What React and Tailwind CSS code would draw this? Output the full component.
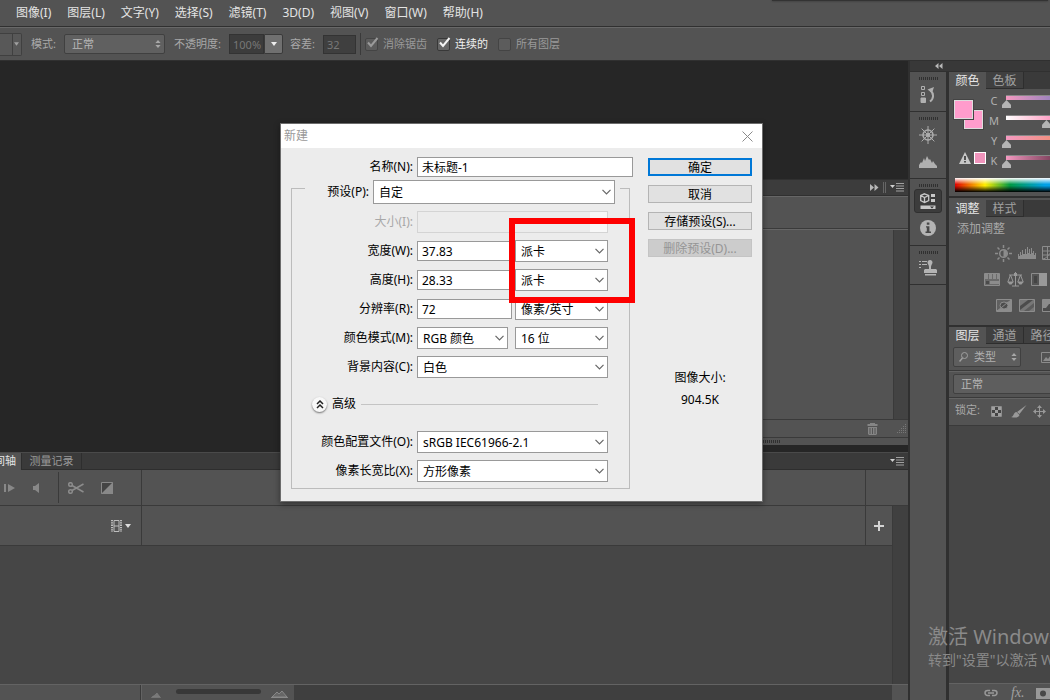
import { useState } from "react";

const MENUS = ["图像(I)", "图层(L)", "文字(Y)", "选择(S)", "滤镜(T)", "3D(D)", "视图(V)", "窗口(W)", "帮助(H)"];

/* ---------- small shared pieces ---------- */

const UpDown = ({ className }) => (
  <svg className={className} width="6" height="8" viewBox="0 0 6 8" fill="#a8a8a8">
    <path d="M3 0L5.6 3H.4zM3 8L.4 5h5.2z" />
  </svg>
);

const Caret = ({ fill = "#d0d0d0" }) => (
  <svg width="6" height="4" viewBox="0 0 6 4" fill={fill}>
    <path d="M0 0h6L3 4z" />
  </svg>
);

const PanelMenuIcon = () => (
  <svg width="14" height="9" viewBox="0 0 14 9" fill="#a0a0a0">
    <path d="M0 2h5L2.500 5z" fill="#d0d0d0" />
    <path d="M6 0h8v1H6zM6 2.500h8v1H6zM6 5h8v1H6zM6 7.500h8v1H6z" />
  </svg>
);

const Grip = () => (
  <svg width="19" height="3" viewBox="0 0 19 3" className="mx-auto">
    <path d="M.5 0v3M2.500 0v3M4.500 0v3M6.500 0v3M8.500 0v3M10.500 0v3M12.500 0v3M14.500 0v3M16.500 0v3M18.500 0v3" stroke="#303030" />
  </svg>
);

const CheckItem = ({ id, label, checked, disabled }) => {
  const [on, setOn] = useState(checked);
  return (
    <div className="flex items-center gap-[5px]">
      <div className="relative w-[13px] h-[13px]">
        <input
          id={id}
          type="checkbox"
          checked={on}
          disabled={disabled}
          onChange={(e) => setOn(e.target.checked)}
          className="peer block appearance-none w-[13px] h-[13px] rounded-[2px] border border-[#383838] bg-[#666] disabled:border-[#444] disabled:bg-[#5c5c5c]"
        />
        <svg
          className="absolute -top-px left-px hidden peer-checked:block pointer-events-none"
          width="13" height="12" viewBox="0 0 13 12" fill="none"
          stroke={disabled ? "#9a9a9a" : "#f4f4f4"} strokeWidth="2"
        >
          <path d="M2 5.500L5 9L11.500 1" />
        </svg>
      </div>
      <label htmlFor={id} className={disabled ? "text-[#999]" : "text-[#f0f0f0]"}>{label}</label>
    </div>
  );
};

/* ---------- top bars ---------- */

const OptionsBar = () => (
  <div className="flex items-center h-[33px] shrink-0 border-t border-[#686868] text-[11px] text-[#a8a8a8] whitespace-nowrap">
    <button aria-label="工具预设" className="flex items-center justify-end w-[22px] h-[23px] pr-[2px] rounded-r-[2px] border border-l-0 border-[#404040] bg-[#585858]">
      <span className="flex items-center justify-center h-full w-[7px] pl-px border-l border-[#404040]"><Caret fill="#a0a0a0" /></span>
    </button>
    <label htmlFor="mode" className="ml-[9px] w-[33px]">模式:</label>
    <div className="relative">
      <select id="mode" className="block appearance-none w-[101px] h-[20px] pl-[7px] rounded-[2px] border border-[#404040] bg-[#606060] text-[#b8b8b8]">
        <option>正常</option>
      </select>
      <UpDown className="absolute right-[4px] top-[6px] pointer-events-none" />
    </div>
    <label htmlFor="opacity" className="ml-[9px] w-[55px]">不透明度:</label>
    <input id="opacity" defaultValue="100%" className="w-[35px] h-[20px] pl-[3px] border border-[#333] bg-[#3c3c3c] text-[#777]" />
    <button aria-label="不透明度滑块" className="flex items-center justify-center w-[19px] h-[20px] rounded-r-[2px] border border-[#3a3a3a] bg-[#707070]"><Caret fill="#eee" /></button>
    <label htmlFor="tolerance" className="ml-[7px] w-[33px]">容差:</label>
    <input id="tolerance" defaultValue="32" className="w-[33px] h-[19px] pl-[3px] border border-[#333] bg-[#3f3f3f] text-[#777]" />
    <div className="w-px h-[22px] ml-[4px] mr-[4px] bg-[#3a3a3a]" />
    <div className="flex gap-[10px]">
      <CheckItem id="antialias" label="消除锯齿" checked disabled />
      <CheckItem id="contiguous" label="连续的" checked />
      <CheckItem id="allLayers" label="所有图层" checked={false} disabled />
    </div>
  </div>
);

/* ---------- document area ---------- */

const FloatingPanel = () => (
  <div className="flex flex-col w-[420px] h-[266px] mb-[7px] border-t border-[#303030] bg-[#535353]">
    <div className="flex items-center justify-end gap-[4px] h-[16px] pr-[4px] bg-[#3c3c3c] border-b border-[#303030]">
      <svg width="9" height="7" viewBox="0 0 9 7" fill="#b8b8b8"><path d="M0 0l4 3.500L0 7zM4.500 0l4 3.500-4 3.500z" /></svg>
      <div className="w-[3px] h-[11px] border-x border-[#666]" />
      <PanelMenuIcon />
    </div>
    <div className="h-[33px] border-t border-[#666] border-b border-b-[#3a3a3a]" />
    <div className="flex justify-end flex-1 border-t border-[#666]">
      <div className="w-[15px] border-l border-[#3a3a3a] bg-[#434343]" />
    </div>
    <div className="flex items-center justify-end gap-[18px] h-[18px] pr-[2px] border-t border-[#3a3a3a]">
      <svg width="11" height="12" viewBox="0 0 11 12" fill="#858585">
        <path d="M3 0h5v1h2.500v2H.5V1H3zM1 4h9v7l-1 1H2l-1-1z" />
        <path d="M3 5v6M5.500 5v6M8 5v6" stroke="#555" />
      </svg>
      <svg width="10" height="10" viewBox="0 0 10 10" stroke="#777" strokeDasharray="1 1">
        <path d="M9.500 0v10M7.500 2v8M5.500 4v6M3.500 6v4M1.500 8v2" />
      </svg>
    </div>
    <div className="flex items-center h-[8px] border-t border-[#3a3a3a]">
      <svg width="292" height="3"><path d="M257 1.500h35" stroke="#303030" strokeWidth="3" strokeDasharray="1 1" /></svg>
    </div>
  </div>
);

const Timeline = () => (
  <section className="flex flex-col flex-1 min-h-0 bg-[#464646]">
    <div className="flex h-[18px] shrink-0 border-t border-b border-t-[#4a4a4a] border-b-[#2e2e2e] bg-[#3a3a3a] text-[11px] leading-[16px] whitespace-nowrap">
      <button className="flex justify-end w-[21px] h-[17px] pr-[5px] overflow-hidden bg-[#535353] text-[#e4e4e4]">时间轴</button>
      <button className="w-[61px] border-x border-[#2e2e2e] text-[#999]">测量记录</button>
      <div className="flex items-center justify-end flex-1 pr-[4px]"><PanelMenuIcon /></div>
    </div>
    <div className="flex h-[36px] shrink-0 bg-[#535353] border-b border-[#3a3a3a]">
      <div className="flex items-center w-[142px] border-r border-[#3a3a3a]">
        <button aria-label="下一帧" className="ml-[4px]">
          <svg width="11" height="8" viewBox="0 0 11 8" fill="#888"><path d="M0 0h2v8H0zM4 0l7 4-7 4z" /></svg>
        </button>
        <button aria-label="音频" className="ml-[18px]">
          <svg width="8" height="10" viewBox="0 0 8 10" fill="#888"><path d="M0 3h2l4-3v10L2 7H0z" /></svg>
        </button>
        <div className="w-px h-[31px] ml-[17px] bg-[#3a3a3a]" />
        <button aria-label="拆分" className="ml-[9px]">
          <svg width="16" height="12" viewBox="0 0 16 12" fill="none" stroke="#8c8c8c" strokeWidth="1.500">
            <circle cx="2.500" cy="2.500" r="1.800" /><circle cx="2.500" cy="9.500" r="1.800" />
            <path d="M4 3.500L15.500 10M4 8.500L15.500 2" />
          </svg>
        </button>
        <button aria-label="过渡" className="ml-[17px]">
          <svg width="12" height="12" viewBox="0 0 12 12"><path d="M.5.5h11v11H.5z" fill="#444" stroke="#888" /><path d="M12 0v12H0z" fill="#888" /></svg>
        </button>
      </div>
      <div className="flex-1 border-r border-[#3a3a3a]" />
      <div className="w-[42px]" />
    </div>
    <div className="flex h-[40px] shrink-0">
      <div className="flex items-center justify-end w-[142px] pr-[10px] gap-[3px] bg-[#535353] border-r border-b border-[#3a3a3a]">
        <svg width="11" height="12" viewBox="0 0 11 12" fill="none" stroke="#bdbdbd">
          <path d="M3 .5h5v11H3zM3 6h5" /><path d="M1 0v12M10 0v12" strokeWidth="2" strokeDasharray="1.300 1" />
        </svg>
        <Caret fill="#ddd" />
      </div>
      <div className="flex-1 bg-[#535353] border-r border-b border-[#3a3a3a]" />
      <button aria-label="添加媒体" className="flex items-center justify-center w-[26px] bg-[#535353] border-b border-[#3a3a3a]">
        <svg width="10" height="10" viewBox="0 0 10 10" stroke="#d4d4d4" strokeWidth="2"><path d="M5 0v10M0 5h10" /></svg>
      </button>
      <div className="w-[16px] bg-[#404040] border-l border-[#3a3a3a]" />
    </div>
    <div className="flex justify-end flex-1">
      <div className="w-[16px] bg-[#404040] border-l border-[#3a3a3a]" />
    </div>
    <div className="flex h-[16px] shrink-0 bg-[#535353] border-t border-[#636363]">
      <div className="w-[141px] border-r border-[#3a3a3a]" />
      <div className="flex items-center gap-[15px] w-[153px] pl-[9px] border-l border-[#636363]">
        <svg width="10" height="5" viewBox="0 0 10 5" className="mt-[5px]"><path d="M0 4.500h10M1 4l3-2 2-2 3 4z" fill="#777" stroke="#888" strokeWidth=".5" /></svg>
        <div className="w-[85px] h-[5px] mb-[3px] rounded-full bg-[#383838]" />
        <svg width="17" height="8" viewBox="0 0 17 8" className="-ml-[5px] mt-[3px]"><path d="M0 7.500h17M1 7l5-5 2 2 3-3 5 6z" fill="#666" stroke="#929292" strokeWidth=".8" /></svg>
      </div>
      <div className="flex-1 bg-[#3f3f3f]" />
      <div className="w-[16px]" />
    </div>
  </section>
);

/* ---------- icon dock ---------- */

const Dock = () => (
  <nav className="w-[41px] shrink-0 border-l-2 border-r-3 border-[#303030] bg-[#535353]">
    <div className="flex flex-col items-center h-[40px] pt-[5px] border-b border-[#303030]">
      <Grip />
      <button aria-label="历史记录" className="mt-[6px]">
        <svg width="16" height="18" viewBox="0 0 16 18" fill="none" stroke="#b0b0b0">
          <path d="M1.500.5h3v3h-3zM1.500 6.500h3v3h-3z" /><path d="M1 12h4.500v4.500H1z" fill="#b0b0b0" />
          <path d="M10 15.500c4-3 4-8 .5-11" strokeWidth="2" /><path d="M7.500 3.500L14 1l-2 6z" fill="#b0b0b0" stroke="none" />
        </svg>
      </button>
    </div>
    <div className="flex flex-col items-center h-[67px] pt-[5px] border-b border-[#303030]">
      <Grip />
      <button aria-label="导航器" className="mt-[6px]">
        <svg width="18" height="18" viewBox="0 0 18 18" fill="none" stroke="#adadad">
          <circle cx="9" cy="9" r="5" strokeWidth="1.500" /><circle cx="9" cy="9" r="1.500" fill="#adadad" />
          <path d="M9 0v18M0 9h18M2.600 2.600l12.800 12.800M15.400 2.600L2.600 15.400" />
        </svg>
      </button>
      <button aria-label="直方图" className="mt-[12px]">
        <svg width="18" height="12" viewBox="0 0 18 12" fill="#b0b0b0"><path d="M0 12V9l2-3 1 1 2-5 1 3 2-5 2 4 1-1 2 4 1-2 2 3 2 2v2z" /></svg>
      </button>
    </div>
    <div className="flex flex-col items-center h-[67px] pt-[5px] border-b border-[#303030]">
      <Grip />
      <button aria-label="属性" className="flex items-center justify-center w-[28px] h-[24px] mt-[2px] rounded-[3px] border border-[#303030] bg-[#3c3c3c]">
        <svg width="16" height="17" viewBox="0 0 16 17" fill="none" stroke="#c8c8c8">
          <path d="M4.500.8L8.700 2.500v5L4.500 9.500.7 7.500v-5zM.7 2.500l3.800 2 4.200-2M4.500 4.500v5" strokeWidth="1.300" />
          <path d="M11 1h4v3h-4zM11 6h4v3h-4zM.5 12.500h15v3.500H.5z" fill="#c8c8c8" stroke="none" />
          <path d="M10 13.500h4l-2 2z" fill="#333" stroke="none" />
        </svg>
      </button>
      <button aria-label="信息" className="mt-[7px]">
        <svg width="16" height="16" viewBox="0 0 16 16"><circle cx="8" cy="8" r="8" fill="#b4b4b4" /><path d="M6.800 2.500h2.600v2.300H6.800zM6 6.200h3.400v5.300H11v1.500H5.500v-1.500h1.300v-4H6z" fill="#484848" /></svg>
      </button>
    </div>
    <div className="flex flex-col items-center h-[39px] pt-[5px] border-b border-[#303030]">
      <Grip />
      <button aria-label="仿制源" className="mt-[6px]">
        <svg width="18" height="16" viewBox="0 0 18 16" fill="#b4b4b4">
          <path d="M0 1h2v1H0zM3 1h5v1H3zM0 4h2v1H0zM3 4h5v1H3zM0 7h2v1H0z" />
          <path d="M10 7c0-2-1.500-3-1.500-4.500C8.500 1 9.500 0 11 0s2.500 1 2.500 2.500C13.500 4 12 5 12 7v2h5l1 1v3H5v-3l1-1h4zM6 14h11v1.500H6z" />
        </svg>
      </button>
    </div>
  </nav>
);

/* ---------- right hand panels ---------- */

const Tabs = ({ names }) => (
  <div className="flex h-[17px] bg-[#3a3a3a] text-[12px] leading-[17px] whitespace-nowrap">
    {names.map((n, i) => (
      <button
        key={n}
        className={
          i === 0
            ? "w-[37px] shrink-0 bg-[#535353] text-[#e6e6e6]"
            : "w-[38px] shrink-0 border-r border-b border-[#2e2e2e] bg-[#404040] text-[#a0a0a0]"
        }
      >
        {n}
      </button>
    ))}
  </div>
);

const SLIDERS = [
  { name: "C", value: 0, bar: "bg-linear-to-r from-[#f49ac1] to-[#4064b4]" },
  { name: "M", value: 44, bar: "bg-linear-to-r from-white to-[#e8208c]" },
  { name: "Y", value: 0, bar: "bg-linear-to-r from-[#f49ac1] to-[#f08020]" },
  { name: "K", value: 0, bar: "bg-linear-to-r from-[#f49ac1] to-[#200010]" },
];

const ColorPanel = () => (
  <section className="h-[126px] border-b-2 border-[#303030]">
    <Tabs names={["颜色", "色板"]} />
    <div className="flex pl-[5px]">
      <div className="w-[35px] shrink-0 pt-[11px]">
        <div className="relative w-[29px] h-[29px]">
          <button aria-label="背景色" className="absolute right-0 bottom-0 w-[19px] h-[19px] border border-[#ddd] outline outline-[#444] bg-[#ff9ccc]" />
          <button aria-label="前景色" className="absolute left-0 top-0 w-[19px] h-[19px] border border-[#ddd] outline outline-[#444] bg-[#ff9ccc]" />
        </div>
        <div className="flex items-center gap-[3px] mt-[23px] pl-[5px]">
          <svg width="12" height="12" viewBox="0 0 12 12" className="shrink-0"><path d="M6 0l6 12H0z" fill="#c8c8c8" /><path d="M5.200 4h1.600v4H5.200zM5.200 9h1.600v1.500H5.200z" fill="#333" /></svg>
          <button aria-label="色域颜色" className="w-[12px] h-[12px] shrink-0 border border-white bg-[#f094bc]" />
        </div>
      </div>
      <div className="pt-[5px]">
        {SLIDERS.map((s) => (
          <div key={s.name} className="flex h-[20px]">
            <label htmlFor={"ink" + s.name} className="w-[10px] mr-[7px] text-[11px] leading-[14px] text-center text-[#b0b0b0]">{s.name}</label>
            <div className="w-[90px] h-[15px]">
              <div className={`h-[5px] mt-px border-t border-[#888] ${s.bar}`} />
              <input
                id={"ink" + s.name}
                type="range"
                defaultValue={s.value}
                className="block appearance-none w-[100px] h-[8px] -ml-[4px] bg-transparent [&::-webkit-slider-thumb]:appearance-none [&::-webkit-slider-thumb]:w-[9px] [&::-webkit-slider-thumb]:h-[8px] [&::-webkit-slider-thumb]:bg-[#b4b4b4] [&::-webkit-slider-thumb]:[clip-path:polygon(50%_0,100%_60%,100%_100%,0_100%,0_60%)]"
              />
            </div>
          </div>
        ))}
      </div>
    </div>
    <div className="h-[14px] ml-[6px] mt-[4px] bg-[linear-gradient(to_bottom,#ffffff_0%,#ffffff00_45%,#00000000_55%,#000000_100%),linear-gradient(to_right,#e00000,#ffee00_30px,#009a44_55px,#00a0e8_90px)]" />
  </section>
);

const AdjustPanel = () => (
  <section className="h-[129px] pt-[2px] border-b-2 border-[#303030] whitespace-nowrap">
    <Tabs names={["调整", "样式"]} />
    <h2 className="mt-[4px] ml-[8px] text-[12px] leading-[16px] text-[#a8a8a8]">添加调整</h2>
    <div className="flex items-center gap-[6px] w-[120px] h-[18px] mt-[7px] ml-[46px]">
      <svg width="17" height="17" viewBox="0 0 17 17" className="shrink-0" stroke="#8c8c8c" fill="none" strokeWidth="1.500">
        <circle cx="8.500" cy="8.500" r="3.800" /><path d="M8.500 5v7a3.500 3.500 0 0 0 0-7z" fill="#8c8c8c" stroke="none" />
        <path d="M8.500 0v3M8.500 14v3M0 8.500h3M14 8.500h3M2.500 2.500l2 2M12.500 12.500l2 2M2.500 14.500l2-2M12.500 4.500l2-2" />
      </svg>
      <svg width="18" height="12" viewBox="0 0 18 12" className="shrink-0" fill="#8c8c8c"><path d="M0 12V7h1v2h1V5h1v3h1V3h1v4h2V2h1v5h1V0h1v6h1V2h1v5h1V1h1v5h1V4h1v4h1V6h1v6z" /></svg>
      <svg width="16" height="14" viewBox="0 0 16 14" className="shrink-0" stroke="#8c8c8c" fill="none"><path d="M.5.5h15v13H.5zM.5 5h15M.5 9h15M5.500 0v14M10.500 0v14M1 13C7 12 9 3 15 1" /></svg>
    </div>
    <div className="flex items-center gap-[7px] w-[120px] h-[18px] mt-[8px] ml-[35px]">
      <svg width="16" height="13" viewBox="0 0 16 13" className="shrink-0" fill="#8c8c8c"><path d="M.5.5h15v12H.5z" fill="#6a6a6a" stroke="#8c8c8c" /><path d="M1 1h3v5H1zM5 1h3v5H5zM9 1h3v5H9zM13 1h2v5h-2z" /><path d="M2 8h3v3H2z" fill="#4a4a4a" /><path d="M6 8h9v3H6z" /></svg>
      <svg width="17" height="15" viewBox="0 0 17 15" className="shrink-0" fill="none" stroke="#999"><path d="M8.500 0v14M2 3h13M3.500 3L.8 10h5.400zM13.500 3l-2.700 7h5.400zM5 14h7" /><path d="M.5 10h6l-2 2.500h-2zM10.500 10h6l-2 2.500h-2zM7 1h3v3H7z" fill="#999" stroke="none" /></svg>
      <svg width="16" height="13" viewBox="0 0 16 13" className="shrink-0"><path d="M.5.5h15v12H.5z" fill="#555" stroke="#8c8c8c" /><path d="M8 0h8v13H8z" fill="#999" /><path d="M3 3h3v7H3z" fill="#444" /></svg>
    </div>
    <div className="flex items-center gap-[7px] w-[120px] h-[18px] mt-[8px] ml-[47px]">
      <svg width="16" height="13" viewBox="0 0 16 13" className="shrink-0" stroke="#8c8c8c"><path d="M.5.5h15v12H.5z" fill="#606060" /><path d="M1 12L15 1v11z" fill="#8c8c8c" /><ellipse cx="8" cy="6.500" rx="4" ry="3.500" fill="#4c4c4c" /><path d="M5 9l7-6" /></svg>
      <svg width="16" height="13" viewBox="0 0 16 13" className="shrink-0"><path d="M.5.5h15v12H.5z" fill="#777" stroke="#8c8c8c" /><path d="M1 7l8-6h5L1 11z" fill="#4c4c4c" /><path d="M5 12L15 4v4l-5 4z" fill="#5c5c5c" /></svg>
      <svg width="16" height="13" viewBox="0 0 16 13" className="shrink-0"><path d="M.5.5h15v12H.5z" fill="#8c8c8c" stroke="#8c8c8c" /><path d="M1 9h3l3-4h5l3-3v10H1z" fill="#4c4c4c" /></svg>
    </div>
  </section>
);

const LayersPanel = () => (
  <section className="flex flex-col flex-1 min-h-0 whitespace-nowrap">
    <Tabs names={["图层", "通道", "路径"]} />
    <div className="flex items-center h-[27px] shrink-0 pl-[4px] border-b border-[#3a3a3a]">
      <div className="relative shrink-0">
        <select aria-label="图层筛选" className="block appearance-none w-[68px] h-[20px] pl-[20px] rounded-[2px] border border-[#404040] bg-[#5e5e5e] text-[11px] text-[#b0b0b0]">
          <option>类型</option>
        </select>
        <svg className="absolute left-[6px] top-[5px] pointer-events-none" width="9" height="10" viewBox="0 0 9 10" fill="none" stroke="#a0a0a0"><circle cx="5.500" cy="3.500" r="3" /><path d="M3.500 6L.5 9.500" strokeWidth="1.500" /></svg>
        <UpDown className="absolute right-[4px] top-[6px] pointer-events-none" />
      </div>
      <svg width="14" height="11" viewBox="0 0 14 11" className="ml-[20px] shrink-0"><path d="M.5.5h13v10H.5z" fill="none" stroke="#8c8c8c" /><path d="M2 9l3-4 2 2 3-4 2 6z" fill="#8c8c8c" /></svg>
    </div>
    <div className="h-[27px] shrink-0 pt-[2px] pl-[4px] border-t border-[#636363] border-b border-b-[#3a3a3a]">
      <select aria-label="混合模式" className="block appearance-none w-[120px] h-[20px] pl-[7px] rounded-[2px] border border-[#404040] bg-[#5e5e5e] text-[11px] text-[#b8b8b8]">
        <option>正常</option>
      </select>
    </div>
    <div className="flex items-center h-[28px] shrink-0 pl-[6px] pb-[3px] border-t border-[#636363] border-b border-b-[#3a3a3a] text-[11px] text-[#a8a8a8]">
      <span className="w-[36px] shrink-0">锁定:</span>
      <svg width="11" height="11" viewBox="0 0 11 11" className="mt-[2px] shrink-0"><path d="M.5.5h10v10H.5z" fill="#444" stroke="#8c8c8c" /><path d="M1 1h3v3H1zM7 1h3v3H7zM4 4h3v3H4zM1 7h3v3H1zM7 7h3v3H7z" fill="#a0a0a0" /></svg>
      <svg width="16" height="13" viewBox="0 0 16 13" className="ml-[9px] mt-[2px] shrink-0" fill="#999"><path d="M15.500 0L8.500 9 6 7zM5.500 7L8.500 10c-1 3-5 3-8.500 2 3 0 2-4.500 5.500-5z" /></svg>
      <svg width="13" height="13" viewBox="0 0 13 13" className="ml-[6px] mt-px shrink-0" fill="#999"><path d="M6.500 0L9 3H7v3h3V4l3 2.500L10 9V7H7v3h2l-2.500 3L4 10h2V7H3v2L0 6.500 3 4v2h3V3H4z" /></svg>
    </div>
    <div className="flex-1 bg-[#464646]" />
    <div className="flex items-center h-[17px] shrink-0 pl-[35px] pt-[2px] border-t border-[#636363] text-[#a0a0a0]">
      <svg width="14" height="8" viewBox="0 0 14 8" fill="none" stroke="#999" strokeWidth="1.500" className="shrink-0"><path d="M6 1.500H3.500a2.500 2.500 0 0 0 0 5H6M8 1.500h2.500a2.500 2.500 0 0 1 0 5H8M4 4h6" /></svg>
      <button className="ml-[13px] font-['Liberation_Serif',serif] italic text-[14px] leading-[14px]">fx.</button>
      <svg width="15" height="11" viewBox="0 0 15 11" className="ml-[11px] shrink-0"><path d="M0 0h15v11H0z" fill="#999" /><circle cx="7" cy="5.500" r="3" fill="#484848" /></svg>
    </div>
  </section>
);

/* ---------- "new document" dialog ---------- */

const Select = ({ id, label, value, className, disabled }) => (
  <div className={`relative ${className}`}>
    <select
      id={id}
      aria-label={label}
      disabled={disabled}
      className="block appearance-none w-full h-full pl-[5px] pt-px border border-[#999] bg-white text-black disabled:opacity-100 disabled:border-[#d4d4d4] disabled:bg-[#ececec]"
    >
      <option>{value}</option>
    </select>
    {disabled ? (
      <div className="absolute right-px inset-y-px w-[17px] bg-[#f8f8f8] pointer-events-none" />
    ) : (
      <svg className="absolute right-[4px] inset-y-0 my-auto pointer-events-none" width="9" height="6" viewBox="0 0 9 6" fill="none" stroke="#666" strokeWidth="1.200">
        <path d="M.5 .8l4 4 4-4" />
      </svg>
    )}
  </div>
);

const Row = ({ id, label, children, disabled }) => (
  <div className="flex items-center h-[22px]">
    <label htmlFor={id} className={disabled ? "w-[121px] mr-[4px] shrink-0 text-right text-[#a8a8a8]" : "w-[121px] mr-[4px] shrink-0 text-right"}>{label}</label>
    {children}
  </div>
);

const inputClass = "h-[20px] pl-[4px] border border-[#999] bg-white";
const buttonClass = "h-[18px] leading-[17px] border border-[#b4b4b4] bg-[#e1e1e1] disabled:bg-[#cccccc] disabled:border-[#c4c4c4] disabled:text-[#959595]";

const NewDialog = () => (
  <div role="dialog" aria-label="新建" className="absolute left-[280px] top-[123px] w-[483px] border border-[#6c6c6c] bg-[#ececec] text-[12px] leading-[16px] text-black whitespace-nowrap shadow-[0_2px_6px_#00000066]">
    <div className="flex items-center justify-between h-[24px] pl-[3px] pr-[9px] bg-white text-[#999]">
      <h1>新建</h1>
      <button aria-label="关闭">
        <svg width="11" height="11" viewBox="0 0 11 11" stroke="#8a8a8a"><path d="M.5.5l10 10M10.500.5l-10 10" /></svg>
      </button>
    </div>
    <form className="flex gap-[15px] pt-[9px] pl-[10px] pr-[10px] pb-[12px]" onSubmit={(e) => e.preventDefault()}>
      <div className="flex-1">
        <div className="flex items-center h-[20px]">
          <label htmlFor="docName" className="w-[122px] mr-[4px] shrink-0 text-right">名称(N):</label>
          <input id="docName" defaultValue="未标题-1" className={`${inputClass} flex-1 min-w-0`} />
        </div>
        <fieldset className="mt-[3px] mr-[3px] pb-[6px] border border-[#bcbcbc]">
          <legend className="flex items-start h-[16px] ml-[13px] pr-[5px]">
            <label htmlFor="preset" className="w-[64px] mr-[4px] mt-[4px] text-right">预设(P):</label>
            <Select id="preset" value="自定" className="w-[242px] h-[24px]" />
          </legend>
          <div className="flex flex-col gap-[7px] pt-[15px]">
            <Row id="size" label="大小(I):" disabled><Select id="size" value="" disabled className="w-[191px] h-[22px]" /></Row>
            <Row id="width" label="宽度(W):">
              <input id="width" defaultValue="37.83" className={`${inputClass} w-[95px] mr-[3px]`} />
              <Select label="宽度单位" value="派卡" className="w-[93px] h-[22px]" />
            </Row>
            <Row id="height" label="高度(H):">
              <input id="height" defaultValue="28.33" className={`${inputClass} w-[95px] mr-[3px]`} />
              <Select label="高度单位" value="派卡" className="w-[93px] h-[22px]" />
            </Row>
            <Row id="res" label="分辨率(R):">
              <input id="res" defaultValue="72" className={`${inputClass} w-[95px] mr-[3px]`} />
              <Select label="分辨率单位" value="像素/英寸" className="w-[93px] h-[22px]" />
            </Row>
            <Row id="colorMode" label="颜色模式(M):">
              <Select id="colorMode" value="RGB 颜色" className="w-[91px] h-[22px] mr-[7px]" />
              <Select label="位深度" value="16 位" className="w-[93px] h-[22px]" />
            </Row>
            <Row id="bg" label="背景内容(C):"><Select id="bg" value="白色" className="w-[191px] h-[22px]" /></Row>
          </div>
          <div className="flex items-center h-[16px] mt-[18px] mb-[19px] pl-[20px] pr-[31px]">
            <button type="button" aria-label="收起高级" className="flex items-center justify-center w-[15px] h-[15px] rounded-full bg-[#f8f8f8] shadow-[0_1px_2px_#00000088]">
              <svg width="8" height="9" viewBox="0 0 8 9" fill="none" stroke="#222" strokeWidth="1.500"><path d="M1 4l3-3 3 3M1 8l3-3 3 3" /></svg>
            </button>
            <span className="ml-[5px] mr-[5px]">高级</span>
            <div className="flex-1 h-px bg-[#c4c4c4]" />
          </div>
          <div className="flex flex-col gap-[7px]">
            <Row id="profile" label="颜色配置文件(O):"><Select id="profile" value="sRGB IEC61966-2.1" className="w-[191px] h-[22px]" /></Row>
            <Row id="aspect" label="像素长宽比(X):"><Select id="aspect" value="方形像素" className="w-[191px] h-[22px]" /></Row>
          </div>
        </fieldset>
      </div>
      <div className="flex flex-col gap-[9px] w-[104px] pt-px">
        <button className={`${buttonClass} outline-2 -outline-offset-2 outline-[#0078d7]`}>确定</button>
        <button type="button" className={buttonClass}>取消</button>
        <button type="button" className={buttonClass}>存储预设(S)...</button>
        <button type="button" disabled className={buttonClass}>删除预设(D)...</button>
        <div className="flex flex-col gap-[6px] mt-[104px] text-center">
          <p>图像大小:</p>
          <p>904.5K</p>
        </div>
      </div>
    </form>
  </div>
);

const App = () => {
  return (
    <div className="relative flex flex-col h-screen overflow-hidden bg-[#535353] font-['Noto_Sans','Noto_Sans_CJK_SC',sans-serif]">
      <header className="flex items-center gap-[16px] h-[27px] shrink-0 pl-[16px] border-b border-[#303030] text-[12px] text-[#e4e4e4] whitespace-nowrap">
        {MENUS.map((m) => (
          <button key={m}>{m}</button>
        ))}
      </header>
      <div className="absolute top-0 left-[772px] right-[2px] h-px bg-[#333] shadow-[0_0_2px_#222]" />
      <OptionsBar />

      <div className="flex flex-1 min-h-0 border-t border-[#303030]">
        <main className="flex flex-col flex-1 min-w-0">
          <div className="flex items-end justify-end h-[391px] shrink-0 bg-[#262626]">
            <FloatingPanel />
          </div>
          <Timeline />
        </main>
        <div className="flex flex-col shrink-0">
          <button aria-label="折叠面板" className="flex items-center h-[11px] shrink-0 pl-[25px] border-b border-l-2 border-[#303030] bg-[#383838]">
            <svg width="8" height="6" viewBox="0 0 8 6" fill="#b8b8b8"><path d="M3.500 0v6L0 3zM7.500 0v6L4 3z" /></svg>
          </button>
          <div className="flex flex-1 min-h-0">
            <Dock />
            <aside className="flex flex-col w-[101px] overflow-hidden bg-[#535353]">
              <ColorPanel />
              <AdjustPanel />
              <LayersPanel />
            </aside>
          </div>
        </div>
      </div>

      <NewDialog />

      {/* callout around the unit drop-downs */}
      <div className="absolute left-[509px] top-[218px] w-[126px] h-[85px] border-6 border-[#fe0000] pointer-events-none" />

      <div className="absolute left-[928px] top-[624px] text-[#8a8a8a] whitespace-nowrap pointer-events-none">
        <p className="text-[20px] leading-[26px]">激活 Windows</p>
        <p className="text-[14px] leading-[20px]">转到"设置"以激活 Windows。</p>
      </div>
    </div>
  );
};

export default App;
